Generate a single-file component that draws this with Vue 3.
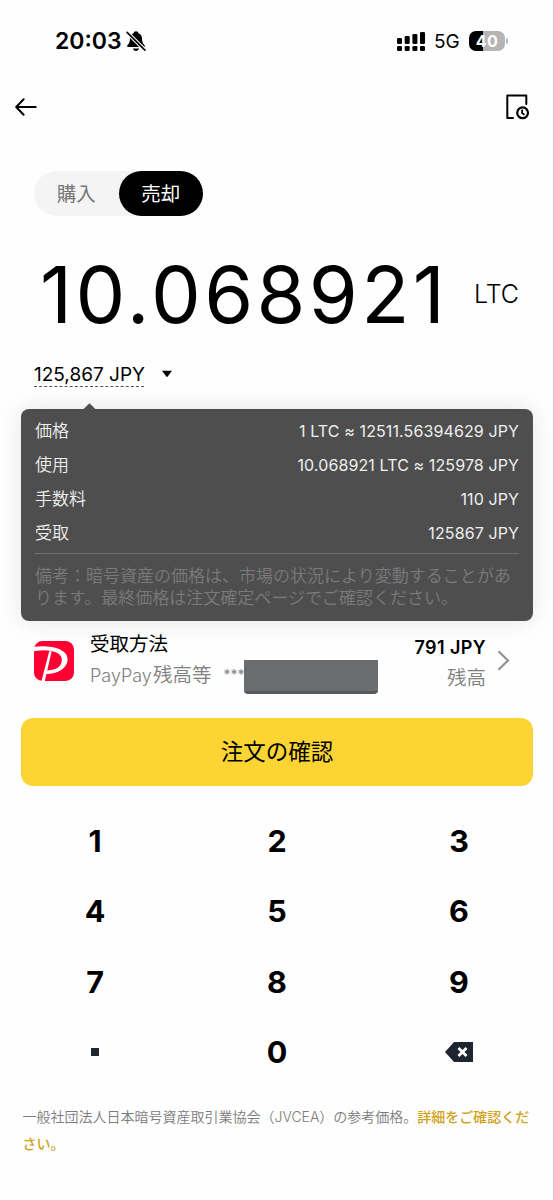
<script setup>
import { ref } from "vue";

const mode = ref("sell")
const amount = ref("10.068921")

const rows = [
    { label: "価格", value: "1 LTC ≈ 12511.56394629 JPY" },
    { label: "使用", value: "10.068921 LTC ≈ 125978 JPY" },
    { label: "手数料", value: "110 JPY" },
    { label: "受取", value: "125867 JPY" },
]

const keys = ["1", "2", "3", "4", "5", "6", "7", "8", "9", ".", "0", "del"]

const press = (key) => {
    if (key === "del") {
        amount.value = amount.value.slice(0, -1)
        return
    }
    if (key === "." && amount.value.includes(".")) return
    amount.value += key
}
</script>

<template>
    <div class="screen">
        <!-- Status bar -->
        <div class="status">
            <span class="time">20:03</span>
            <svg class="bell" width="20" height="22" viewBox="0 0 20 22">
                <path d="M10 1.2C8.600 1.200 7.600 2 7.500 3.200C5 4.200 3.900 6.300 3.900 9C3.900 12.500 2.700 13.800 1.400 15.300C.800 16.200 1.100 17 2.100 17H17.900C18.900 17 19.200 16.200 18.600 15.300C17.300 13.800 16.100 12.500 16.100 9C16.100 6.300 15 4.200 12.500 3.200C12.400 2 11.400 1.200 10 1.200Z" fill="#000" />
                <path d="M7 18.500H13C12.700 20 11.600 20.900 10 20.900S7.300 20 7 18.500Z" fill="#000" />
                <path d="M.300 1.500L19.300 20.500" stroke="#fff" stroke-width="3.800" />
                <path d="M1.100 2.300L18.900 20.100" stroke="#000" stroke-width="1.700" stroke-linecap="round" />
            </svg>
            <svg class="signal" width="29" height="21" viewBox="0 0 29 21">
                <rect x="0" y="7" width="5" height="6" rx="1.300" />
                <rect x="7.700" y="5" width="5" height="8" rx="1.300" />
                <rect x="15.400" y="3" width="5" height="10" rx="1.300" />
                <rect x="23" y="1" width="5" height="12" rx="1.300" />
                <rect x="0" y="15" width="5" height="5" rx="1.300" />
                <rect x="7.700" y="15" width="5" height="5" rx="1.300" />
                <rect x="15.400" y="15" width="5" height="5" rx="1.300" />
                <rect x="23" y="15" width="5" height="5" rx="1.300" />
            </svg>
            <span class="net">5G</span>
            <span class="battery">40</span>
            <span class="cap"></span>
        </div>

        <!-- Nav -->
        <div class="nav">
            <svg width="22" height="18" viewBox="0 0 22 18" fill="none" stroke="#000" stroke-width="2" stroke-linecap="round" stroke-linejoin="round">
                <path d="M20.700 9H1.300M8.600 1.300L1.200 9L8.600 16.700" />
            </svg>
            <svg width="24" height="26" viewBox="0 0 24 26" fill="none" stroke="#000" stroke-width="2" stroke-linecap="round" stroke-linejoin="round">
                <path d="M7 24H1.300V1.500H20.300V10" />
                <circle cx="16.600" cy="18.800" r="5.400" stroke-width="2.200" />
                <path d="M16.100 16.200V19L17.900 20.400" stroke-width="1.800" />
            </svg>
        </div>

        <div class="tabs">
            <button :class="{ active: mode === 'buy' }" @click="mode = 'buy'">購入</button>
            <button :class="{ active: mode === 'sell' }" @click="mode = 'sell'">売却</button>
        </div>

        <div class="amount">
            <span class="number">{{ amount }}</span>
            <span class="unit">LTC</span>
        </div>

        <div class="fiat">
            <span class="fiat-text">125,867 JPY</span>
            <svg width="12" height="8" viewBox="0 0 12 8"><path d="M1 .800H11L6.700 6.600Q6 7.400 5.300 6.600Z" /></svg>
        </div>

        <!-- Price detail -->
        <div class="tooltip">
            <div v-for="row in rows" :key="row.label" class="row">
                <span>{{ row.label }}</span>
                <span class="value">{{ row.value }}</span>
            </div>
            <p class="note">備考：暗号資産の価格は、市場の状況により変動することがあります。最終価格は注文確定ページでご確認ください。</p>
        </div>

        <!-- Payout method -->
        <div class="method">
            <svg class="logo" width="40" height="40" viewBox="0 0 118 118">
                <rect width="118" height="118" rx="25" fill="#ff0033" />
                <path d="M0 17C48 11 101 23 99 55C97 86 60 98 34 97L37 87C62 87 83 78 82 54C81 33 48 22 0 30Z" fill="#fff" />
                <path d="M45 30H52L32 118H22Z" fill="#fff" />
            </svg>
            <div class="method-info">
                <div class="title">受取方法</div>
                <div class="sub"><span class="pp">PayPay</span>残高等<span class="stars">***</span><span class="mask"></span></div>
            </div>
            <div class="balance">
                <div class="bal">791 JPY</div>
                <div class="bal-label">残高</div>
            </div>
            <svg class="chev" width="13" height="21" viewBox="0 0 13 21" fill="none" stroke="#929292" stroke-width="2.200">
                <path d="M1.500 1.200L11 10.500L1.500 19.800" />
            </svg>
        </div>

        <button class="confirm">注文の確認</button>

        <div class="keypad">
            <button v-for="key in keys" :key="key" @click="press(key)">
                <span v-if="key === '.'" class="dot"></span>
                <svg v-else-if="key === 'del'" width="28" height="20" viewBox="0 0 28 20">
                    <path d="M0 10L9 0H28V20H9Z" fill="#202630" />
                    <path d="M13.500 6L21.500 14M21.500 6L13.500 14" stroke="#fff" stroke-width="2.800" />
                </svg>
                <template v-else>{{ key }}</template>
            </button>
        </div>

        <p class="footer">一般社団法人日本暗号資産取引業協会（JVCEA）の参考価格。<a>詳細をご確認ください。</a></p>
    </div>
</template>

<style>
body {
    margin: 0;
    background: #fefefe;
}
</style>

<style scoped>
.screen {
    box-sizing: border-box;
    width: 554px;
    height: 1200px;
    overflow: hidden;
    border-right: 1px solid #c8c8c8;
    background: #fefefe;
    color: #000;
    font-family: Inter, "Noto Sans CJK JP", sans-serif;
}

button {
    border: 0;
    padding: 0;
    background: none;
    color: inherit;
    font-family: inherit;
}

svg {
    display: block;
    flex: none;
}

.status {
    display: flex;
    align-items: center;
    height: 82px;
    padding-left: 55px;
}

.time {
    width: 71px;
    font-size: 23px;
    font-weight: 600;
}

.signal {
    margin-left: 251px;
}

.net {
    width: 35px;
    margin-left: 8px;
    font-size: 19px;
}

.battery {
    width: 36px;
    height: 20px;
    border-radius: 7px;
    background: linear-gradient(90deg, #000 40%, #b5b5b5 40%);
    color: #fff;
    font-size: 16px;
    font-weight: 700;
    line-height: 20px;
    text-align: center;
    letter-spacing: 0.5px;
}

.cap {
    width: 2px;
    height: 6px;
    margin-left: 1px;
    border-radius: 0 3px 3px 0;
    background: #b5b5b5;
}

.nav {
    display: flex;
    justify-content: space-between;
    align-items: center;
    height: 50px;
    padding: 0 23px 0 15px;
}

.tabs {
    display: flex;
    width: 169px;
    height: 45px;
    margin: 39px 0 0 34px;
    border-radius: 23px;
    background: #f4f4f4;
}

.tabs button {
    flex: 1;
    border-radius: 23px;
    color: #777;
    font-size: 19.500px;
    line-height: 46px;
}

.tabs .active {
    background: #000;
    color: #fff;
}

.amount {
    display: flex;
    align-items: center;
    justify-content: space-between;
    height: 142px;
    padding: 0 34px 0 40px;
    line-height: 1;
}

.number {
    font-size: 79px;
    letter-spacing: 3.400px;
    padding-top: 15px;
}

.unit {
    font-size: 25px;
    padding-top: 15px;
    font-weight: 350;
}

.fiat {
    display: flex;
    align-items: center;
    height: 27px;
    margin: 2px 0 0 34px;
}

.fiat-text {
    box-sizing: border-box;
    width: 110px;
    height: 26px;
    margin-right: 17px;
    border-bottom: 1px dashed #555;
    font-size: 19px;
    line-height: 27px;
    white-space: nowrap;
}

.tooltip {
    position: relative;
    box-sizing: border-box;
    height: 212px;
    margin: 22px 20px 0 21px;
    padding: 5px 14px 0;
    border-radius: 8px;
    background: #4e4e4e;
    box-shadow: 0 0 24px rgba(0, 0, 0, 0.1);
    color: #eee;
    font-size: 17px;
    font-weight: 350;
}

.tooltip::before {
    content: "";
    position: absolute;
    top: -4px;
    left: 64px;
    width: 9px;
    height: 9px;
    background: #4e4e4e;
    transform: rotate(45deg);
}

.row {
    display: flex;
    justify-content: space-between;
    height: 34px;
    line-height: 34px;
}

.value {
    font-size: 16px;
    letter-spacing: 0.110px;
    font-weight: 400;
}

.note {
    margin: 3px 0 0;
    padding-top: 12px;
    border-top: 1px solid #707070;
    color: #7a7a7a;
    line-height: 21.500px;
}

.method {
    display: flex;
    height: 97px;
    padding: 0 43px 0 34px;
}

.logo {
    margin-top: 20px;
}

.method-info {
    margin-left: 16px;
    padding-top: 8px;
    font-size: 19.500px;
    line-height: 31px;
}

.sub {
    display: flex;
    color: #808080;
    font-weight: 350;
}

.pp {
    width: 63px;
    font-size: 18px;
}

.stars {
    width: 20px;
    margin-left: 12px;
    font-size: 14px;
    font-weight: 400;
    line-height: 30px;
}

.mask {
    box-sizing: border-box;
    width: 134px;
    height: 34px;
    border-bottom: 3px solid #565862;
    border-radius: 0 0 4px 4px;
    background: #6b6c6e;
}

.balance {
    flex: 1;
    padding-top: 11px;
    font-size: 19.500px;
    line-height: 31px;
    text-align: right;
    white-space: nowrap;
}

.bal {
    font-size: 18px;
    font-weight: 600;
    letter-spacing: 0.400px;
}

.bal-label {
    color: #808080;
    font-weight: 350;
}

.chev {
    margin: 29px 0 0 11px;
}

.confirm {
    display: block;
    width: 512px;
    height: 68px;
    margin-left: 21px;
    border-radius: 12px;
    background: #fcd535;
    font-size: 22.500px;
    line-height: 66px;
}

.keypad {
    display: grid;
    grid-template-columns: repeat(3, 182px);
    grid-auto-rows: 70.400px;
    margin: 20px 0 0 4px;
}

.keypad button {
    display: flex;
    align-items: center;
    justify-content: center;
    font-size: 30.500px;
    font-weight: 650;
    line-height: 1;
}

.dot {
    width: 8px;
    height: 8px;
    background: #202630;
}

.footer {
    margin: 15px 10px 0 22.500px;
    color: #7c7c7c;
    font-size: 14px;
    font-weight: 350;
    line-height: 27px;
}

.footer a {
    color: #d0a21c;
    font-weight: 500;
}
</style>
